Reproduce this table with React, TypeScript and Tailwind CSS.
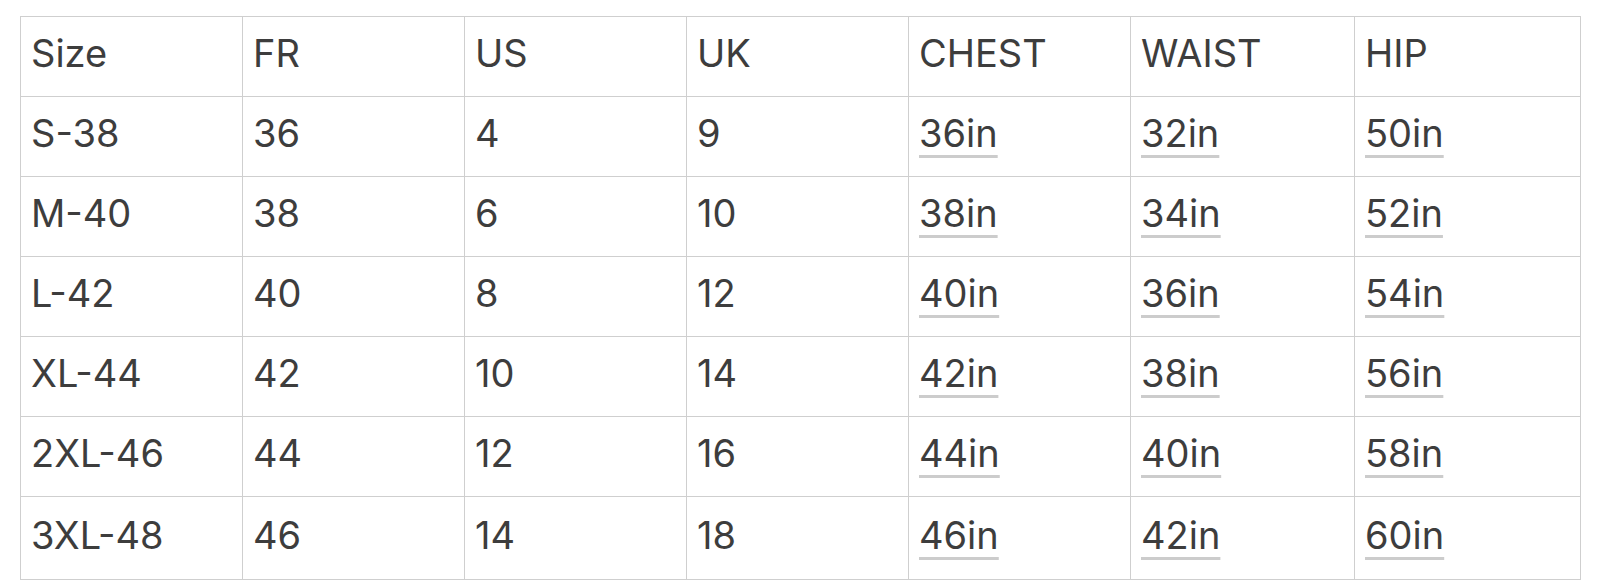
import React from "react";

const header = ["Size", "FR", "US", "UK", "CHEST", "WAIST", "HIP"];
const rows = [
  ["S-38", "36", "4", "9", "36in", "32in", "50in"],
  ["M-40", "38", "6", "10", "38in", "34in", "52in"],
  ["L-42", "40", "8", "12", "40in", "36in", "54in"],
  ["XL-44", "42", "10", "14", "42in", "38in", "56in"],
  ["2XL-46", "44", "12", "16", "44in", "40in", "58in"],
  ["3XL-48", "46", "14", "18", "46in", "42in", "60in"],
];

export default function App() {
  return (
    <div
      className="w-[1600px] h-[586px] bg-white pt-4 pl-5"
      style={{ fontFamily: 'Inter, "Noto Sans", sans-serif' }}
    >
      <table className="w-[1560px] table-fixed border-collapse text-[38px] text-[#3d3d3d]">
        <colgroup>
          <col className="w-[222px]" />
          <col className="w-[222px]" />
          <col className="w-[222px]" />
          <col className="w-[222px]" />
          <col className="w-[222px]" />
          <col className="w-[224px]" />
          <col className="w-[226px]" />
        </colgroup>
        <thead>
          <tr className="h-[80px]">
            {header.map((h) => (
              <th
                key={h}
                className="border border-[#cfcfcf] pl-[10px] pb-[6px] text-left font-normal align-middle"
              >
                {h}
              </th>
            ))}
          </tr>
        </thead>
        <tbody>
          {rows.map((r, i) => (
            <tr key={i} className={i === rows.length - 1 ? "h-[83px]" : "h-[80px]"}>
              {r.map((c, j) => (
                <td
                  key={j}
                  className="border border-[#cfcfcf] pl-[10px] pb-[6px] align-middle"
                >
                  {j >= 4 ? (
                    <span className="underline decoration-[#cccccc] decoration-[3px] underline-offset-[8px]">
                      {c}
                    </span>
                  ) : (
                    c
                  )}
                </td>
              ))}
            </tr>
          ))}
        </tbody>
      </table>
    </div>
  );
}
